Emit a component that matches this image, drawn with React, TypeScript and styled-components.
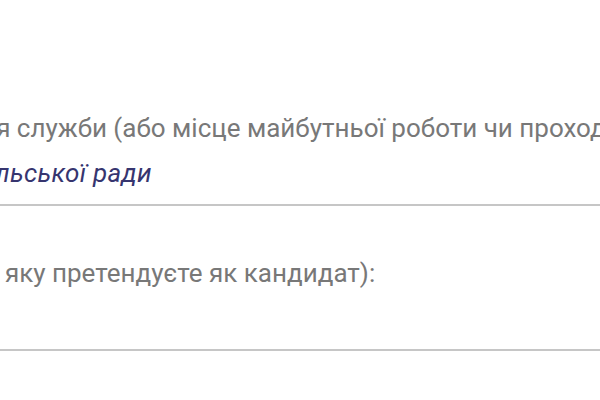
import React from "react";
import styled, { createGlobalStyle } from "styled-components";

const GlobalStyle = createGlobalStyle`
  html, body {
    margin: 0;
    padding: 0;
    background: #ffffff;
  }
  body {
    font-family: Roboto, "Noto Sans", sans-serif;
  }
`;

const Page = styled.div`
  width: 600px;
  height: 400px;
  overflow: hidden;
  padding-top: 113px;
  box-sizing: border-box;
  display: flex;
  flex-direction: column;
  gap: 52px;
`;

const Field = styled.div`
  display: flex;
  flex-direction: column;
  gap: 15px;
  padding-bottom: 16px;
  border-bottom: 2px solid #c6c6c6;
`;

const Label = styled.label<{ $shift: number }>`
  display: block;
  font-size: 26px;
  line-height: 30px;
  color: #787878;
  white-space: nowrap;
  text-indent: ${(p) => -p.$shift}px;
`;

const Value = styled.div<{ $shift: number }>`
  height: 30px;
  font-size: 26px;
  line-height: 30px;
  font-style: italic;
  color: #36356f;
  white-space: nowrap;
  letter-spacing: 0.3px;
  text-indent: ${(p) => -p.$shift}px;
`;

export default function App() {
  return (
    <>
      <GlobalStyle />
      <Page>
        <Field>
          <Label $shift={232}>
            Місце проходження служби (або місце майбутньої роботи чи проходження служби):
          </Label>
          <Value $shift={276}>Виконавчий комітет сільської ради</Value>
        </Field>
        <Field>
          <Label $shift={137}>Посада (на яку претендуєте як кандидат):</Label>
          <Value $shift={0}></Value>
        </Field>
      </Page>
    </>
  );
}
